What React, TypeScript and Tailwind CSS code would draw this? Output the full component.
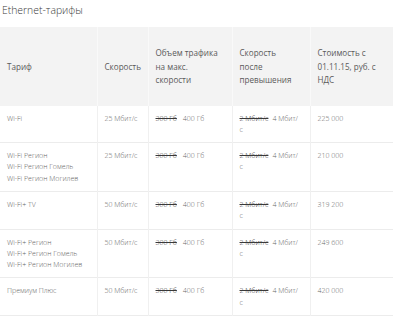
const rows = [
  { name: ['Wi-Fi'], speed: '25 Мбит/с', price: '225 000' },
  { name: ['Wi-Fi Регион', 'Wi-Fi Регион Гомель', 'Wi-Fi Регион Могилев'], speed: '25 Мбит/с', price: '210 000' },
  { name: ['Wi-Fi+ TV'], speed: '50 Мбит/с', price: '319 200' },
  { name: ['Wi-Fi+ Регион', 'Wi-Fi+ Регион Гомель', 'Wi-Fi+ Регион Могилев'], speed: '50 Мбит/с', price: '249 600' },
  { name: ['Премиум Плюс'], speed: '50 Мбит/с', price: '420 000' },
];

const th = 'border-l border-[#f9f9f9] first:border-l-0 px-[7px] py-[19px] text-left align-middle font-normal';
const td = 'border-l border-[#f0f0f0] first:border-l-0 px-[7px] py-[7px] align-top';

export default function App() {
  return (
    <div className="h-[320px] w-[393px] overflow-hidden bg-white font-['Open_Sans',sans-serif]">
      <h1 className="px-[2px] pt-[1px] text-[10.4px] font-light leading-[18px] text-[#3a3a3a]">Ethernet-тарифы</h1>
      <table className="mt-[8px] w-[393px] table-fixed border-collapse">
        <colgroup>
          <col className="w-[97px]" />
          <col className="w-[51px]" />
          <col className="w-[84px]" />
          <col className="w-[78px]" />
          <col />
        </colgroup>
        <thead>
          <tr className="bg-[#f3f3f3] text-[8.1px] leading-[13.5px] text-[#5a5a5a]">
            <th className={th}>Тариф</th>
            <th className={th}>Скорость</th>
            <th className={th}>
              Объем трафика
              <br />
              на макс.
              <br />
              скорости
            </th>
            <th className={th}>
              Скорость
              <br />
              после
              <br />
              превышения
            </th>
            <th className={th}>
              Стоимость с
              <br />
              01.11.15, руб. с
              <br />
              НДС
            </th>
          </tr>
        </thead>
        <tbody className="text-[7px] font-light leading-[11.3px] text-[#666]">
          {rows.map((r) => (
            <tr key={r.price} className="border-b border-[#ececec]">
              <td className={td}>
                {r.name.map((n) => (
                  <div key={n} className="whitespace-nowrap">{n}</div>
                ))}
              </td>
              <td className={td}>
                <span className="whitespace-nowrap">{r.speed}</span>
              </td>
              <td className={td}>
                <span className="text-[#3a3a3a] line-through">300 Гб</span>
                <span className="ml-[6px]">400 Гб</span>
              </td>
              <td className={td}>
                <span className="whitespace-nowrap">
                  <span className="text-[#3a3a3a] line-through">2 Мбит/с</span>
                  <span className="ml-[4px]">4 Мбит/</span>
                </span>
                <br />
                с
              </td>
              <td className={td}>{r.price}</td>
            </tr>
          ))}
        </tbody>
      </table>
    </div>
  );
}
